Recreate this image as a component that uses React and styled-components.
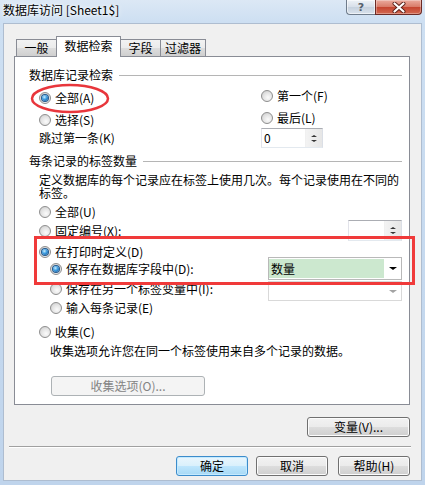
import React from 'react';
import styled, { createGlobalStyle, css } from 'styled-components';

const GlobalStyle = createGlobalStyle`
  html, body { margin: 0; padding: 0; }
  body {
    width: 425px;
    height: 485px;
    overflow: hidden;
    background: #c4d7ed;
    font-family: "Noto Sans CJK SC", "Noto Sans", sans-serif;
    font-size: 12px;
    color: #000;
  }
`;

const Window = styled.div`
  width: 425px;
  height: 485px;
  display: flex;
  flex-direction: column;
  background: linear-gradient(180deg, #dce8f5 0, #cddff2 22px, #bfd4ec 100%);
`;

const TitleBar = styled.div`
  height: 23px;
  flex: none;
  display: flex;
  align-items: flex-start;
  padding: 0 3px;
`;

const Title = styled.div`
  margin-top: 4px;
  line-height: 12px;
  white-space: nowrap;
  text-shadow: 0 0 6px #fff, 0 0 3px #fff;
`;

const Caption = styled.div`
  margin-left: auto;
  display: flex;
`;

const HelpBtn = styled.div`
  width: 29px;
  height: 15px;
  box-sizing: border-box;
  border: 1px solid #6f7c8b;
  border-top: none;
  border-right: none;
  border-radius: 0 0 0 4px;
  background: linear-gradient(180deg, #eef2f7 0, #d7dfe9 50%, #c6d1de 51%, #d9e2ec 100%);
  box-shadow: inset 0 0 0 1px rgba(255,255,255,0.55);
  display: flex;
  align-items: center;
  justify-content: center;
  font-family: "DejaVu Sans", sans-serif;
  font-weight: bold;
  font-size: 11px;
  color: #56606c;
  line-height: 1;
`;

const CloseBtn = styled.div`
  width: 47px;
  height: 15px;
  box-sizing: border-box;
  border: 1px solid #6b2a25;
  border-top: none;
  border-radius: 0 0 4px 0;
  background: linear-gradient(180deg, #ebab9e 0, #d87a67 50%, #c5442f 51%, #d36a52 100%);
  box-shadow: inset 0 0 0 1px rgba(255,255,255,0.3);
  display: flex;
  align-items: center;
  justify-content: center;
`;

const Client = styled.div`
  flex: 1;
  margin: 0 3px 4px 3px;
  border: 1px solid #aebdd0;
  background: #f0f0f0;
  padding: 12px 11px 0 10px;
  display: flex;
  flex-direction: column;
`;

const TabStrip = styled.div`
  height: 21px;
  display: flex;
  align-items: flex-end;
  padding-left: 2px;
  position: relative;
  z-index: 1;
`;

const Tab = styled.div`
  width: ${p => p.$w}px;
  box-sizing: border-box;
  border: 1px solid #898c95;
  border-bottom: none;
  margin-left: -1px;
  text-align: center;
  white-space: nowrap;
  &:first-child { margin-left: 0; }
  ${p => p.$active ? css`
    height: 21px;
    background: #fff;
    line-height: 18px;
    position: relative;
    z-index: 2;
  ` : css`
    height: 17px;
    margin-bottom: 1px;
    line-height: 16px;
    background: linear-gradient(180deg, #f2f2f2 0, #ebebeb 50%, #dddddd 51%, #cfcfcf 100%);
  `}
`;

const Panel = styled.div`
  height: 349px;
  box-sizing: border-box;
  margin-top: -1px;
  border: 1px solid #898c95;
  background: #fff;
  position: relative;
  padding: 10px 7px 0 14px;
  display: flex;
  flex-direction: column;
`;

const GroupHeader = styled.div`
  height: 16px;
  margin-top: ${p => p.$mt || 0}px;
  display: flex;
  align-items: center;
  gap: 6px;
  line-height: 16px;
  white-space: nowrap;
`;

const GroupLine = styled.div`
  flex: 1;
  height: 1px;
  background: #b5b5b5;
`;

const Columns = styled.div`
  display: grid;
  grid-template-columns: 222px 1fr;
  padding-left: 10px;
`;

const Column = styled.div`
  display: flex;
  flex-direction: column;
`;

const Body = styled.div`
  display: flex;
  flex-direction: column;
  padding-left: 10px;
`;

const Row = styled.div`
  height: ${p => p.$h || 16}px;
  margin-top: ${p => p.$mt || 0}px;
  padding-left: ${p => p.$indent || 0}px;
  display: flex;
  align-items: ${p => p.$top ? 'flex-start' : 'center'};
  white-space: nowrap;
`;

const Label = styled.span`
  line-height: 16px;
  color: ${p => p.$disabled ? '#8d8d8d' : '#000'};
`;

const RadioDot = styled.span`
  flex: none;
  width: 12px;
  height: 12px;
  box-sizing: border-box;
  border-radius: 50%;
  border: 1px solid #8e8e8e;
  background: radial-gradient(circle at 60% 65%, #fbfbfb 0, #e4e4e4 50%, #c6c6c6 100%);
  margin-right: 4px;
  margin-top: ${p => p.$top ? 2 : 0}px;
  position: relative;
  ${p => p.$checked && css`
    &::after {
      content: '';
      position: absolute;
      left: 2px;
      top: 2px;
      width: 6px;
      height: 6px;
      border-radius: 50%;
      background: radial-gradient(circle at 40% 35%, #c9eeff 0, #3b9be0 45%, #0d4a88 100%);
      box-shadow: 0 0 0 1px #23588c;
    }
  `}
`;

const Text = styled.div`
  height: ${p => p.$h || 12}px;
  margin-top: ${p => p.$mt || 0}px;
  padding-left: ${p => p.$indent || 0}px;
  line-height: ${p => p.$h || 12}px;
  white-space: nowrap;
`;

const Spin = styled.div`
  width: ${p => p.$w}px;
  height: ${p => p.$h}px;
  margin-left: ${p => p.$right ? 'auto' : '0'};
  box-sizing: border-box;
  border: 1px solid #abadb3;
  border-color: #abadb3 #dbdfe6 #e3e9ef #e2e3ea;
  background: #fff;
  display: flex;
`;

const SpinValue = styled.div`
  flex: 1;
  padding-left: 2px;
  line-height: 17px;
`;

const SpinArrows = styled.div`
  width: 16px;
  display: flex;
  flex-direction: column;
  align-items: center;
  justify-content: center;
  gap: 3px;
  background: linear-gradient(90deg, #f3f3f3, #e6e6e6);
  border-left: 1px solid #f0f0f0;
`;

const Tri = styled.span`
  width: 0;
  height: 0;
  border-left: ${p => p.$s}px solid transparent;
  border-right: ${p => p.$s}px solid transparent;
  ${p => p.$up
    ? css`border-bottom: ${p.$s - 1}px solid ${p.$c};`
    : css`border-top: ${p.$s - 1}px solid ${p.$c};`}
`;

const Combo = styled.div`
  margin-left: auto;
  width: 134px;
  height: ${p => p.$h}px;
  box-sizing: border-box;
  border: 1px solid ${p => p.$disabled ? '#d9d9d9' : '#b9b9b9'};
  background: #fff;
  padding: 1px 0;
  display: flex;
`;

const ComboField = styled.div`
  width: 115px;
  background: ${p => p.$fill || 'transparent'};
  padding-left: 2px;
  box-sizing: border-box;
  line-height: 19px;
`;

const ComboArrow = styled.div`
  flex: 1;
  display: flex;
  align-items: center;
  justify-content: center;
`;

const Button = styled.div`
  width: ${p => p.$w}px;
  height: 20px;
  margin-left: ${p => p.$ml || 0}px;
  box-sizing: border-box;
  border: 1px solid #707070;
  border-radius: 3px;
  background: linear-gradient(180deg, #f2f2f2 0, #ebebeb 50%, #dddddd 51%, #cfcfcf 100%);
  box-shadow: inset 0 0 0 1px #fcfcfc;
  text-align: center;
  line-height: 18px;
  white-space: nowrap;
  ${p => p.$default && css`
    border-color: #3c8ccb;
    background: linear-gradient(180deg, #eaf6fd 0, #d9f0fc 50%, #bee6fd 51%, #a7d9f5 100%);
    box-shadow: inset 0 0 0 1px #c4eaff;
  `}
  ${p => p.$disabled && css`
    border-color: #adb2b5;
    background: #f4f4f4;
    box-shadow: none;
    color: #838383;
  `}
`;

const ButtonRow = styled.div`
  display: flex;
  justify-content: ${p => p.$start ? 'flex-start' : 'flex-end'};
  margin-top: ${p => p.$mt || 0}px;
`;

const Separator = styled.div`
  height: 1px;
  margin: 9px -1px 0 -5px;
  background: #a0a0a0;
  box-shadow: 0 1px 0 #fff;
`;

const Ellipse = styled.svg`
  position: absolute;
  left: 16px;
  top: 27px;
  overflow: visible;
  pointer-events: none;
`;

const Mark = styled.div`
  position: absolute;
  left: 19px;
  top: 179px;
  width: 381px;
  height: 49px;
  box-sizing: border-box;
  border: 3px solid #f03a3a;
  pointer-events: none;
`;

const Radio = ({ checked, children, top }) => (
  <>
    <RadioDot $checked={checked} $top={top} />
    <Label>{children}</Label>
  </>
);

const Arrow = ({ color }) => <Tri $s={4} $c={color} />;

const SpinBox = ({ w, h, value, right }) => (
  <Spin $w={w} $h={h} $right={right}>
    <SpinValue>{value}</SpinValue>
    <SpinArrows>
      <Tri $up $s={3} $c="#333" />
      <Tri $s={3} $c="#333" />
    </SpinArrows>
  </Spin>
);

const App = () => (
  <Window>
    <GlobalStyle />
    <TitleBar>
      <Title>数据库访问 [Sheet1$]</Title>
      <Caption>
        <HelpBtn>?</HelpBtn>
        <CloseBtn>
          <svg width="14" height="11" viewBox="0 0 14 11">
            <path d="M2.5 1.5 L11.5 9.5 M11.5 1.5 L2.5 9.5" stroke="#5a2019" strokeWidth="4" strokeLinecap="round" />
            <path d="M2.5 1.5 L11.5 9.5 M11.5 1.5 L2.5 9.5" stroke="#fff" strokeWidth="2.2" strokeLinecap="round" />
          </svg>
        </CloseBtn>
      </Caption>
    </TitleBar>
    <Client>
      <TabStrip>
        <Tab $w={41}>一般</Tab>
        <Tab $w={65} $active>数据检索</Tab>
        <Tab $w={41}>字段</Tab>
        <Tab $w={46}>过滤器</Tab>
      </TabStrip>
      <Panel>
        <GroupHeader>
          数据库记录检索
          <GroupLine />
        </GroupHeader>
        <Columns>
          <Column>
            <Row $mt={7}><Radio checked>全部(A)</Radio></Row>
            <Row $mt={6}><Radio>选择(S)</Radio></Row>
            <Row $mt={2}><Label>跳过第一条(K)</Label></Row>
          </Column>
          <Column>
            <Row $mt={5}><Radio>第一个(F)</Radio></Row>
            <Row $mt={6}><Radio>最后(L)</Radio></Row>
            <Row $mt={2} $h={20}>
              <SpinBox w={62} h={20} value="0" />
            </Row>
          </Column>
        </Columns>

        <GroupHeader $mt={5}>
          每条记录的标签数量
          <GroupLine />
        </GroupHeader>
        <Text $mt={4} $h={13} $indent={10}>定义数据库的每个记录应在标签上使用几次。每个记录使用在不同的</Text>
        <Text $h={13} $indent={10}>标签。</Text>
        <Body>
          <Row $mt={5}><Radio>全部(U)</Radio></Row>
          <Row $h={21}>
            <Radio>固定编号(X):</Radio>
            <SpinBox w={54} h={21} right />
          </Row>
          <Row $mt={3}><Radio checked>在打印时定义(D)</Radio></Row>
          <Row $mt={-3} $h={23} $indent={11}>
            <Radio checked>保存在数据库字段中(D):</Radio>
            <Combo $h={23}>
              <ComboField $fill="#cce8cf">数量</ComboField>
              <ComboArrow><Arrow color="#000" /></ComboArrow>
            </Combo>
          </Row>
          <Row $mt={1} $h={20} $indent={11} $top>
            <Radio top>保存在另一个标签变量中(I):</Radio>
            <Combo $h={20} $disabled>
              <ComboField />
              <ComboArrow><Arrow color="#a3a3a3" /></ComboArrow>
            </Combo>
          </Row>
          <Row $mt={-1} $indent={11}><Radio>输入每条记录(E)</Radio></Row>
          <Row $mt={8}><Radio>收集(C)</Radio></Row>
          <Text $mt={5} $indent={11}>收集选项允许您在同一个标签使用来自多个记录的数据。</Text>
          <ButtonRow $mt={19} $start>
            <Button $w={154} $ml={12} $disabled>收集选项(O)...</Button>
          </ButtonRow>
        </Body>

        <Ellipse width="78" height="29">
          <ellipse cx="39" cy="14.5" rx="38" ry="13.5" fill="none" stroke="#e8363c" strokeWidth="2.5" />
        </Ellipse>
        <Mark />
      </Panel>
      <ButtonRow $mt={12}>
        <Button $w={103}>变量(V)...</Button>
      </ButtonRow>
      <Separator />
      <ButtonRow $mt={9}>
        <Button $w={72} $default>确定</Button>
        <Button $w={72} $ml={8}>取消</Button>
        <Button $w={72} $ml={10}>帮助(H)</Button>
      </ButtonRow>
    </Client>
  </Window>
);

export default App;
